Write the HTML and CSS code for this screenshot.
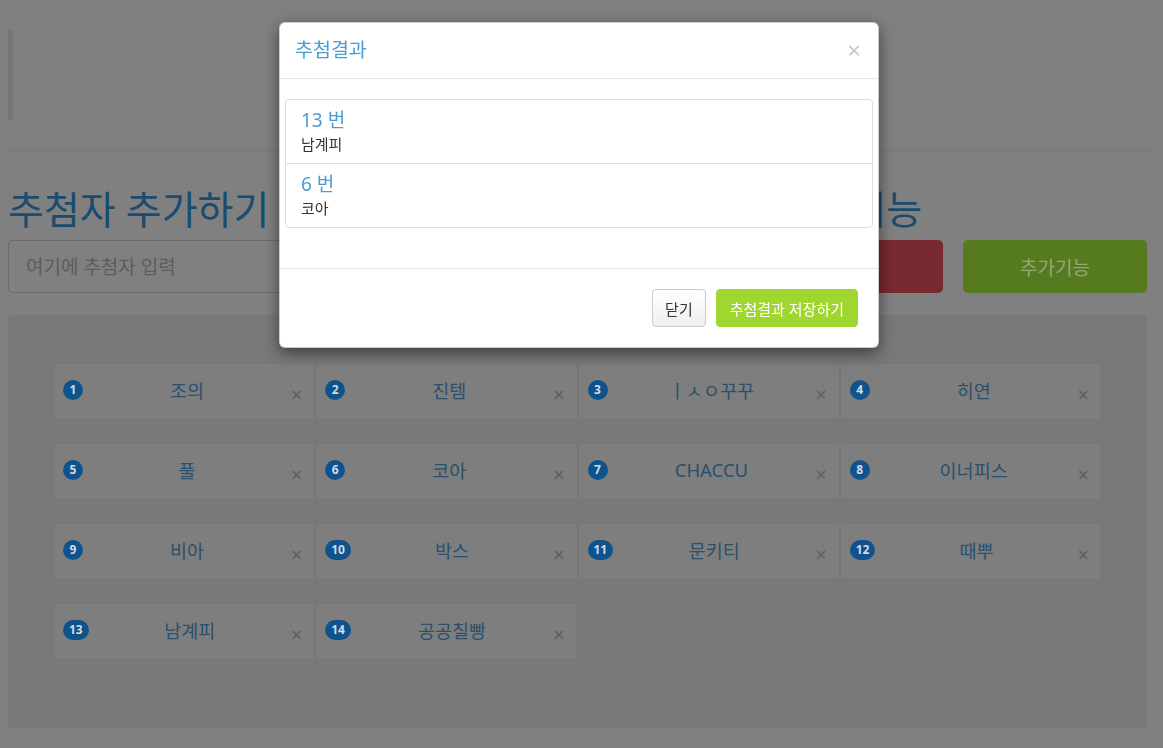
FILE: index.html
```html
<!DOCTYPE html>
<html lang="ko">
<head>
  <meta charset="UTF-8">
  <title>추첨기</title>
  <link rel="stylesheet" href="styles.css">
</head>
<body>
  <div class="page">
    <blockquote class="notice"></blockquote>
    <hr class="divider">

    <div class="title-row">
      <h2 class="section-title">추첨자 추가하기</h2>
      <h2 class="section-title">추첨하기 및 추가기능</h2>
    </div>

    <div class="input-row">
      <input class="name-input" type="text" placeholder="여기에 추첨자 입력">
      <button class="big-btn btn-red">추첨</button>
      <button class="big-btn btn-green">추가기능</button>
    </div>

    <div class="panel">
      <div class="card-grid">
        <div class="card"><span class="badge">1</span><span class="name">조의</span><span class="remove">×</span></div>
        <div class="card"><span class="badge">2</span><span class="name">진템</span><span class="remove">×</span></div>
        <div class="card"><span class="badge">3</span><span class="name">ㅣㅅㅇ꾸꾸</span><span class="remove">×</span></div>
        <div class="card"><span class="badge">4</span><span class="name">히연</span><span class="remove">×</span></div>
        <div class="card"><span class="badge">5</span><span class="name">풀</span><span class="remove">×</span></div>
        <div class="card"><span class="badge">6</span><span class="name">코아</span><span class="remove">×</span></div>
        <div class="card"><span class="badge">7</span><span class="name">CHACCU</span><span class="remove">×</span></div>
        <div class="card"><span class="badge">8</span><span class="name">이너피스</span><span class="remove">×</span></div>
        <div class="card"><span class="badge">9</span><span class="name">비아</span><span class="remove">×</span></div>
        <div class="card"><span class="badge">10</span><span class="name">박스</span><span class="remove">×</span></div>
        <div class="card"><span class="badge">11</span><span class="name">문키티</span><span class="remove">×</span></div>
        <div class="card"><span class="badge">12</span><span class="name">때뿌</span><span class="remove">×</span></div>
        <div class="card"><span class="badge">13</span><span class="name">남계피</span><span class="remove">×</span></div>
        <div class="card"><span class="badge">14</span><span class="name">공공칠빵</span><span class="remove">×</span></div>
      </div>
    </div>
  </div>

  <div class="modal">
    <div class="modal-header">
      <h4 class="modal-title">추첨결과</h4>
      <span class="modal-close">×</span>
    </div>
    <div class="modal-body">
      <div class="result-list">
        <div class="result-item">
          <h4 class="result-num">13 번</h4>
          <p class="result-name">남계피</p>
        </div>
        <div class="result-item">
          <h4 class="result-num">6 번</h4>
          <p class="result-name">코아</p>
        </div>
      </div>
    </div>
    <div class="modal-footer">
      <button class="btn btn-default">닫기</button>
      <button class="btn btn-save">추첨결과 저장하기</button>
    </div>
  </div>
</body>
</html>
```

FILE: styles.css
```css
body {
  margin: 0;
  background-color: #808080;
  font-family: "Noto Sans", "Noto Sans CJK KR", sans-serif;
  color: #333;
}
.page {
  padding: 0 16px 0 8px;
}
.notice {
  margin: 30px 0 0;
  height: 90px;
  border-left: 5px solid #777;
}
.divider {
  margin: 30px -8px 0 0;
  border: 0;
  border-top: 1px solid #777;
}
.title-row {
  display: grid;
  grid-template-columns: 571px 1fr;
  margin-top: 37px;
}
.section-title {
  margin: 0;
  font-size: 39px;
  font-weight: normal;
  line-height: 42px;
  color: #1b4b6e;
  white-space: nowrap;
}
.input-row {
  display: flex;
  gap: 20px;
  margin-top: 10px;
  height: 53px;
}
.name-input {
  flex: 1;
  border: 1px solid #6b6b6b;
  border-radius: 4px;
  background: transparent;
  padding: 0 17px;
  font-family: inherit;
  font-size: 19px;
}
.name-input::placeholder {
  color: #5c5c5c;
}
.big-btn {
  width: 184px;
  border: none;
  border-radius: 5px;
  font-family: inherit;
  font-size: 19px;
}
.btn-red {
  background-color: #792a30;
  color: #a08080;
}
.btn-green {
  background-color: #567b1e;
  color: #94a878;
}
.panel {
  margin-top: 22px;
  background-color: #797979;
  border-radius: 4px;
  padding: 48px 45px 68px;
}
.card-grid {
  display: grid;
  grid-template-columns: repeat(4, 1fr);
  row-gap: 23px;
}
.card {
  display: flex;
  align-items: center;
  height: 57px;
  box-sizing: border-box;
  padding: 0 12px 0 9px;
  background-color: #7e7e7e;
  border: 1px solid #767676;
}
.badge {
  min-width: 20px;
  height: 20px;
  box-sizing: border-box;
  padding: 0 6px;
  border-radius: 10px;
  background-color: #10528c;
  color: #d0dbe6;
  font-size: 12px;
  font-weight: bold;
  line-height: 20px;
  text-align: center;
  margin-top: -4px;
}
.name {
  flex: 1;
  text-align: center;
  font-size: 18.5px;
  color: #2c4f6b;
  margin-top: -4px;
}
.remove {
  font-size: 20px;
  color: #5e5e5e;
  margin-top: 6px;
}
.modal {
  position: fixed;
  top: 22px;
  left: 279px;
  width: 598px;
  background: #fff;
  border: 1px solid rgba(0, 0, 0, 0.2);
  border-radius: 6px;
  box-shadow: 0 5px 15px rgba(0, 0, 0, 0.5);
}
.modal-header {
  display: flex;
  justify-content: space-between;
  align-items: center;
  padding: 14px 15px 15px;
  border-bottom: 1px solid #e5e5e5;
}
.modal-title {
  margin: 0;
  font-size: 19.5px;
  font-weight: normal;
  line-height: 26px;
  color: #4b9cd3;
}
.modal-close {
  font-size: 24px;
  line-height: 1;
  color: #c8c8c8;
  margin-right: 2px;
}
.modal-body {
  padding: 20px 5px 40px;
}
.result-list {
  border: 1px solid #ddd;
  border-radius: 4px;
}
.result-item {
  padding: 9px 15px;
}
.result-item + .result-item {
  border-top: 1px solid #ddd;
}
.result-num {
  margin: 0 0 3px;
  font-size: 19px;
  font-weight: normal;
  line-height: 22px;
  color: #4b9cd3;
}
.result-name {
  margin: 0;
  font-size: 15px;
  line-height: 20px;
  color: #333;
}
.modal-footer {
  display: flex;
  justify-content: flex-end;
  gap: 10px;
  padding: 20px;
  border-top: 1px solid #e5e5e5;
}
.btn {
  height: 38px;
  padding: 0 12px;
  border-radius: 4px;
  font-family: inherit;
  font-size: 15px;
  cursor: pointer;
}
.btn-default {
  background: linear-gradient(#fff, #efefef);
  border: 1px solid #ccc;
  color: #333;
}
.btn-save {
  padding: 0 13px;
  background-color: #9fd630;
  border: 1px solid #9fd630;
  color: #fff;
}
```
